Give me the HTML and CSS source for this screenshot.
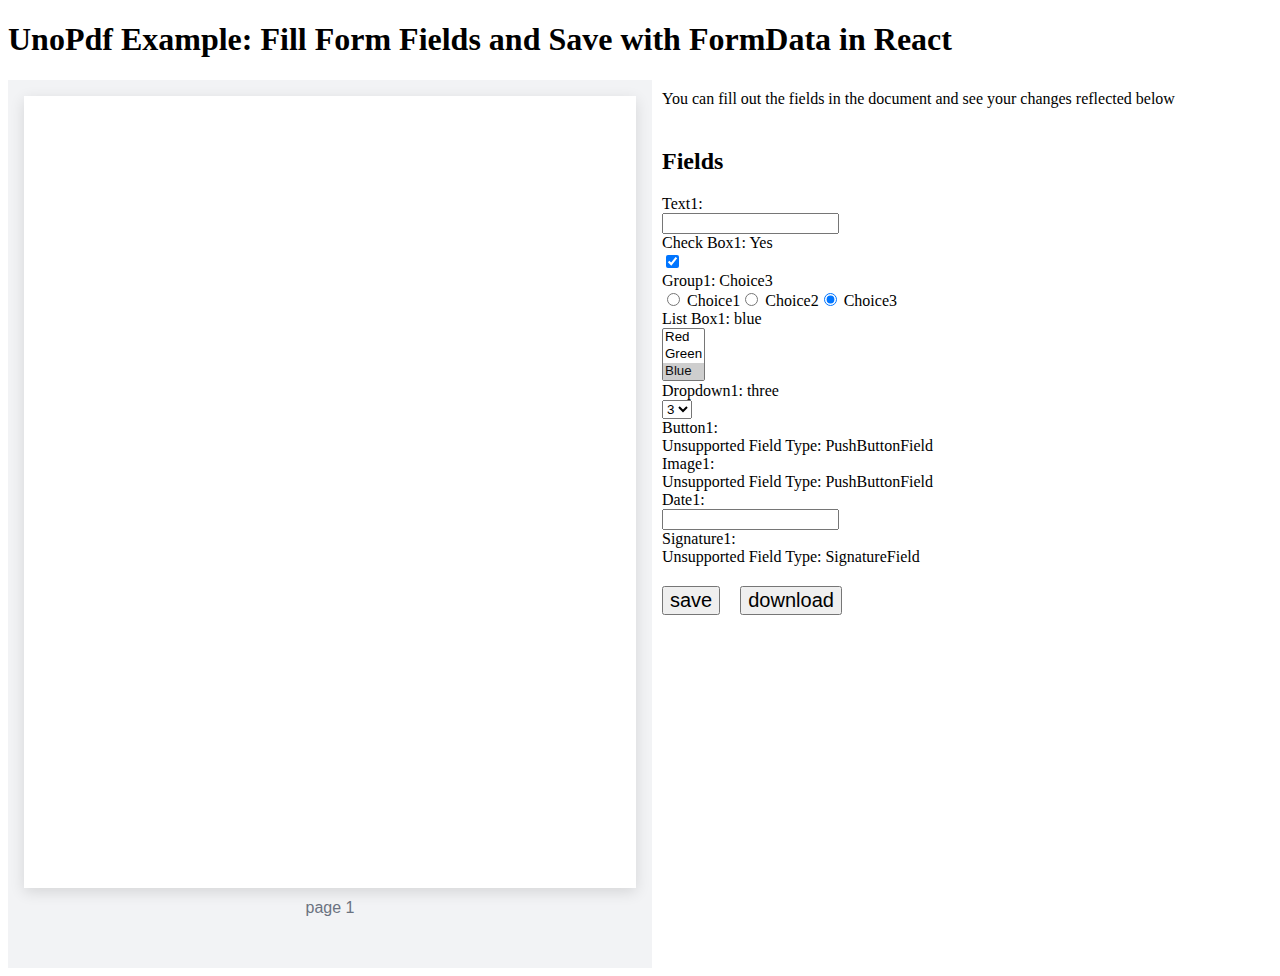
FILE: index.html
```html
<!DOCTYPE html>
<html>
<head>
<meta charset="utf-8">
<link rel="stylesheet" href="styles.css">
</head>
<body>
<h1>UnoPdf Example: Fill Form Fields and Save with FormData in React</h1>
<div class="layout">
  <div class="viewer">
    <div class="page"></div>
    <div class="page-label">page 1</div>
  </div>
  <div class="side">
    <div class="intro">You can fill out the fields in the document and see your changes reflected below</div>
    <h2>Fields</h2>
    <div class="fields">
      <div>Text1: </div>
      <div><input type="text" class="txt"></div>
      <div>Check Box1: Yes</div>
      <div><input type="checkbox" checked></div>
      <div>Group1: Choice3</div>
      <div><label><input type="radio" name="g"> Choice1</label><label><input type="radio" name="g"> Choice2</label><label><input type="radio" name="g" checked> Choice3</label></div>
      <div>List Box1: blue</div>
      <div><select multiple size="3" class="list"><option>Red</option><option>Green</option><option selected>Blue</option></select></div>
      <div>Dropdown1: three</div>
      <div><select class="drop"><option>1</option><option>2</option><option selected>3</option></select></div>
      <div>Button1: </div>
      <div>Unsupported Field Type: PushButtonField</div>
      <div>Image1: </div>
      <div>Unsupported Field Type: PushButtonField</div>
      <div>Date1: </div>
      <div><input type="text" class="txt"></div>
      <div>Signature1: </div>
      <div>Unsupported Field Type: SignatureField</div>
    </div>
    <div class="actions">
      <button class="btn">save</button>
      <button class="btn">download</button>
    </div>
  </div>
</div>
</body>
</html>
```
FILE: styles.css
```css
body {
  margin: 8px;
  font-family: "Liberation Serif", "Times New Roman", serif;
  font-size: 16px;
  color: #000;
  background: #fff;
}
h1 {
  font-size: 32px;
  font-weight: bold;
  margin: 13.44px 0 21.44px;
}
.layout {
  display: flex;
  align-items: flex-start;
}
.viewer {
  width: 644px;
  height: 888px;
  box-sizing: border-box;
  background: #f2f3f5;
  padding: 16px;
  flex-shrink: 0;
}
.page {
  width: 612px;
  height: 792px;
  background: #fff;
  box-shadow: 0 4px 14px rgba(0, 0, 0, 0.12);
}
.page-label {
  margin-top: 11px;
  text-align: center;
  font-family: "Liberation Sans", Arial, sans-serif;
  color: #6b7280;
  font-size: 16px;
}
.side {
  padding: 10px 10px;
}
.intro {
  line-height: 18px;
}
h2 {
  font-size: 24px;
  font-weight: bold;
  margin: 40px 0 20px;
}
.fields input[type="checkbox"] {
  margin: 3px 3px 3px 4px;
}
.fields input[type="radio"] {
  margin: 3px 3px 0 5px;
}
.txt, select {
  font-family: "Liberation Sans", Arial, sans-serif;
  font-size: 13.33px;
}
.txt {
  width: 169px;
  box-sizing: content-box;
}
.actions {
  margin-top: 20px;
  display: flex;
  gap: 20px;
}
.btn {
  font-family: "Liberation Sans", Arial, sans-serif;
  font-size: 20px;
}
```
